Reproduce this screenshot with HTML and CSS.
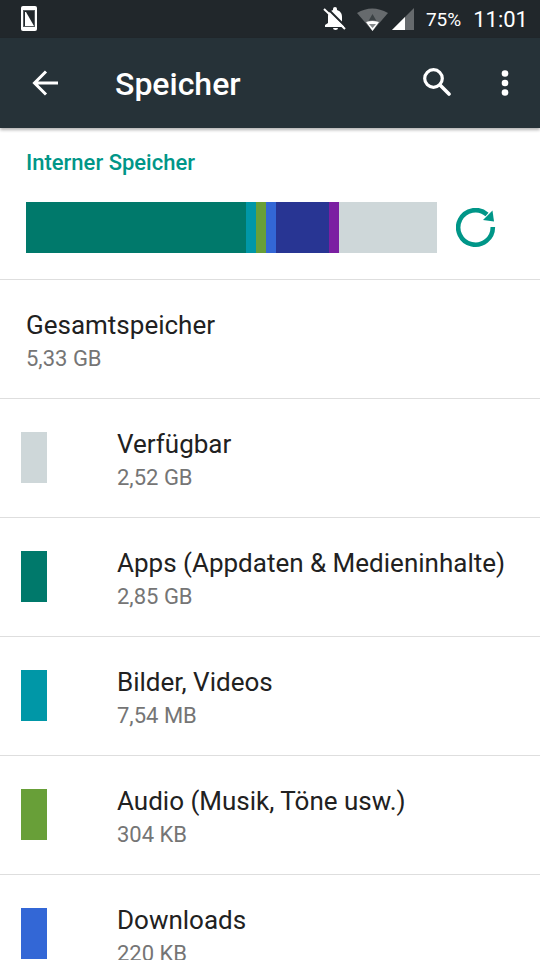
FILE: index.html
```html
<!DOCTYPE html>
<html lang="de">
<head>
<meta charset="utf-8">
<meta name="viewport" content="width=device-width, initial-scale=1">
<title>Speicher</title>
<link rel="stylesheet" href="styles.css">
</head>
<body>
<div class="screen">
  <div class="status-bar">
    <svg class="status-app" width="16" height="26" viewBox="0 0 16 26" aria-hidden="true">
      <rect width="16" height="25" rx="2" fill="#fff"/>
      <rect x="2" y="4" width="12" height="17" fill="#555b5e"/>
      <rect x="3" y="5" width="10" height="15" fill="#21272b"/>
      <path d="M4 6h1l8 14H4z" fill="#fff"/>
    </svg>
    <svg class="status-bell" width="24" height="24" viewBox="0 0 24 24" aria-hidden="true">
      <path d="M2 20v-2l3-2v-6c0-4 2-6 5-7V2a2 2 0 0 1 4 0v1c3 1 5 3 5 7v6l2 2v2z" fill="#fff"/>
      <path d="M10 21h5a2.500 2 0 0 1-5 0z" fill="#fff"/>
      <path d="M3 0l21 21" stroke="#21272b" stroke-width="2"/>
      <path d="M1 2l21 20" stroke="#fff" stroke-width="2"/>
    </svg>
    <svg class="status-wifi" width="31" height="23" viewBox="0 0 31 23" aria-hidden="true">
      <path d="M0 5Q15-4 31 5L15.500 23z" fill="#666a6d"/>
      <path d="M15.500 6l4 7q-4-2-8 0z" fill="#3c4245"/>
      <path d="M9 14q6-2 13 0l-6.500 9z" fill="#fff"/>
      <path d="M12 16h7l-3.500 4z" fill="#85898b"/>
    </svg>
    <svg class="status-signal" width="22" height="22" viewBox="0 0 22 22" aria-hidden="true">
      <path d="M22 0v22H0z" fill="#666a6d"/>
      <path d="M13 9v13H0z" fill="#fff"/>
    </svg>
    <span class="battery">75%</span>
    <span class="clock">11:01</span>
  </div>

  <header class="toolbar">
    <button class="icon-button" type="button" aria-label="Zurück">
      <svg width="26" height="26" viewBox="0 0 26 26" aria-hidden="true"><path d="M26 13H3M14 1.500L2.500 13 14 24.500" fill="none" stroke="#fff" stroke-width="3"/></svg>
    </button>
    <h1 class="toolbar-title">Speicher</h1>
    <button class="icon-button search" type="button" aria-label="Suchen">
      <svg width="28" height="30" viewBox="0 0 28 30" aria-hidden="true"><circle cx="10.500" cy="10.500" r="8.800" fill="none" stroke="#fff" stroke-width="3.200"/><path d="M17 17l9 9" fill="none" stroke="#fff" stroke-width="3.600" stroke-linecap="round"/></svg>
    </button>
    <button class="icon-button menu" type="button" aria-label="Weitere Optionen">
      <svg width="8" height="26" viewBox="0 0 8 26" aria-hidden="true"><g fill="#fff"><circle cx="4" cy="3.500" r="3.300"/><circle cx="4" cy="13" r="3.300"/><circle cx="4" cy="22.500" r="3.300"/></g></svg>
    </button>
  </header>

  <main class="content">
    <section class="summary">
      <h2 class="summary-title">Interner Speicher</h2>
      <div class="usage">
        <div class="usage-bar">
          <span class="apps" style="flex-grow:220"></span>
          <span class="images" style="flex-grow:10"></span>
          <span class="audio" style="flex-grow:10"></span>
          <span class="downloads" style="flex-grow:10"></span>
          <span class="cache" style="flex-grow:53"></span>
          <span class="misc" style="flex-grow:10"></span>
          <span class="free" style="flex-grow:98"></span>
        </div>
        <button class="icon-button refresh" type="button" aria-label="Aktualisieren">
          <svg width="40" height="40" viewBox="0 0 40 40" aria-hidden="true"><path d="M36.800 19A17.300 17.300 0 1 1 31 6.500" fill="none" stroke="#009688" stroke-width="4.600"/><path d="M36.500 2.500l1.500 11-11-1.500z" fill="#009688"/></svg>
        </button>
      </div>
    </section>
    <ul class="list">
      <li class="row"><div class="label"><div class="name">Gesamtspeicher</div><div class="size">5,33 GB</div></div></li>
      <li class="row"><span class="swatch free"></span><div class="label"><div class="name">Verfügbar</div><div class="size">2,52 GB</div></div></li>
      <li class="row"><span class="swatch apps"></span><div class="label"><div class="name">Apps (Appdaten &amp; Medieninhalte)</div><div class="size">2,85 GB</div></div></li>
      <li class="row"><span class="swatch images"></span><div class="label"><div class="name">Bilder, Videos</div><div class="size">7,54 MB</div></div></li>
      <li class="row"><span class="swatch audio"></span><div class="label"><div class="name">Audio (Musik, Töne usw.)</div><div class="size">304 KB</div></div></li>
      <li class="row"><span class="swatch downloads"></span><div class="label"><div class="name">Downloads</div><div class="size">220 KB</div></div></li>
    </ul>
  </main>
</div>
</body>
</html>
```
FILE: styles.css
```css
* { box-sizing: border-box; }

body {
  margin: 0;
  background: #fff;
  color: #212121;
  font-family: Roboto, "Noto Sans", sans-serif;
}

.screen {
  display: flex;
  flex-direction: column;
  height: 100vh;
}

.status-bar {
  display: flex;
  flex: none;
  align-items: center;
  height: 38px;
  padding: 0 12px 0 21px;
  background: #21272b;
  color: #fff;
}

.status-bell { margin-left: auto; }
.status-wifi { margin-left: 10px; }
.status-signal { margin-left: 4px; }

.battery {
  margin-left: 12px;
  font-size: 19px;
}

.clock {
  margin-left: 12px;
  font-size: 22px;
  line-height: 26px;
  padding-top: 2px;
}

.toolbar {
  position: relative;
  display: flex;
  flex: none;
  align-items: center;
  height: 90px;
  padding: 0 31px 0 32px;
  background: #263238;
  color: #fff;
  box-shadow: 0 2px 3px rgba(0, 0, 0, 0.3);
}

.toolbar-title {
  flex: 1;
  margin: 0 0 0 57px;
  padding-top: 2px;
  font-size: 32px;
  font-weight: 500;
  line-height: 40px;
}

.icon-button {
  display: block;
  flex: none;
  padding: 0;
  border: 0;
  background: none;
  cursor: pointer;
}

.icon-button svg { display: block; }

.menu { margin-left: 50px; }

.content {
  flex: 1;
  min-height: 0;
  overflow-y: auto;
  scrollbar-width: none;
}

.summary { padding: 21px 44px 26px 26px; }

.summary-title {
  margin: 0 0 25px;
  color: #009688;
  font-size: 22px;
  font-weight: 500;
  line-height: 28px;
}

.usage {
  display: flex;
  align-items: center;
  gap: 19px;
}

.usage-bar {
  display: flex;
  flex: 1;
  height: 51px;
}

.usage-bar span { flex-basis: 0; }

.list {
  margin: 0;
  padding: 0;
  list-style: none;
}

.row {
  display: flex;
  align-items: center;
  min-height: 119px;
  padding: 0 26px 1px;
  border-top: 1px solid #dedede;
}

.swatch {
  flex: none;
  width: 26px;
  height: 51px;
  margin: 0 70px 0 -5px;
}

.label { padding-top: 5px; }

.name {
  font-size: 26px;
  line-height: 36px;
}

.size {
  color: #757575;
  font-size: 22px;
  line-height: 32px;
}

.apps { background: #00796b; }
.images { background: #0097a7; }
.audio { background: #689f38; }
.downloads { background: #3367d6; }
.cache { background: #283593; }
.misc { background: #7b1fa2; }
.free { background: #ced7d9; }
```
